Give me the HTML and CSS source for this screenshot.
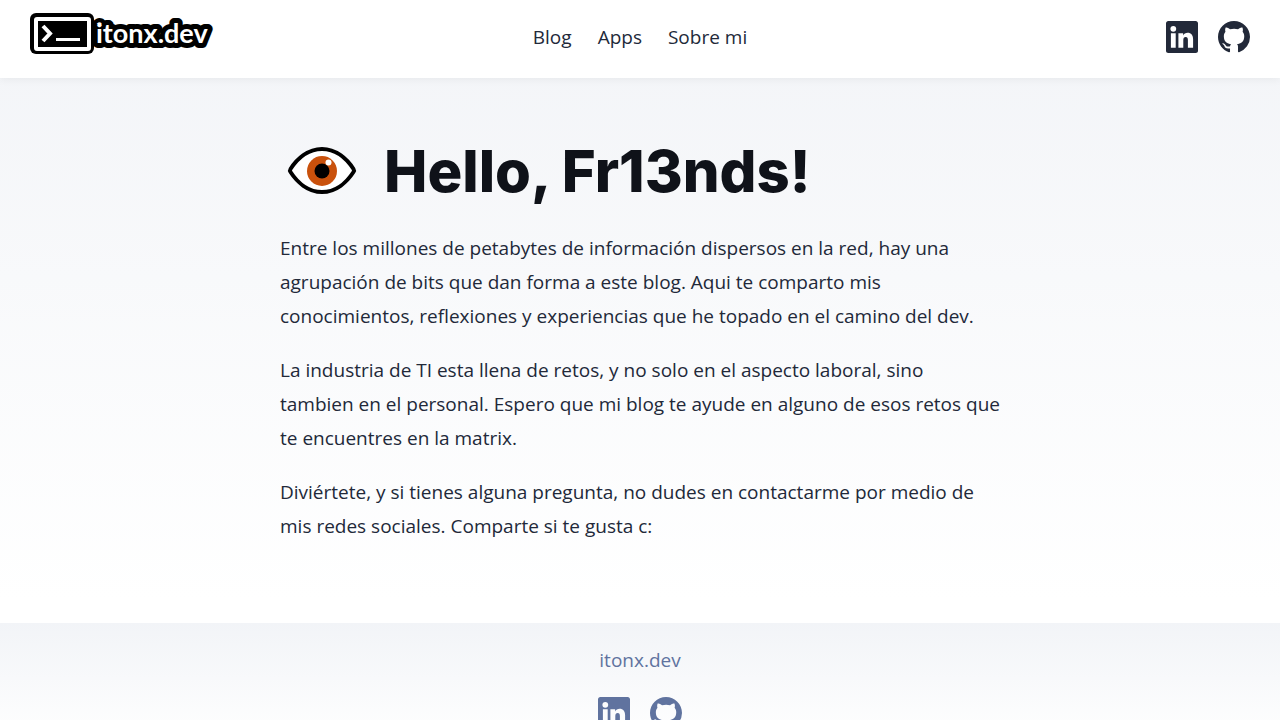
FILE: index.html
```html
<!DOCTYPE html>
<html lang="es">
<head>
    <meta charset="UTF-8">
    <meta name="viewport" content="width=device-width, initial-scale=1.0">
    <title>itonx.dev</title>
    <link rel="stylesheet" href="styles.css">
</head>
<body>
    <svg class="sprite" aria-hidden="true">
        <symbol id="linkedin" viewBox="0 0 32 32">
            <path fill-rule="evenodd" d="M2.3 0h27.4C31 0 32 1 32 2.3v27.4c0 1.3-1 2.3-2.3 2.3H2.3C1 32 0 31 0 29.700V2.300C0 1 1 0 2.300 0zM4.900 12.300v14.400h4.800V12.300zM7.300 4.900a2.900 2.900 0 1 0 0 5.800 2.900 2.900 0 0 0 0-5.800zM12.400 12.300v14.400h4.900v-7.600c0-2 .7-3.200 2.400-3.200 1.600 0 2.200 1.200 2.200 3.200v7.600h5.200v-8.400c0-4-1.900-6.500-5.500-6.500-2 0-3.700 1.100-4.500 2.600v-2.100z"/>
        </symbol>
        <symbol id="github" viewBox="0 0 16 16">
            <path d="M8 0C3.580 0 0 3.580 0 8c0 3.540 2.290 6.530 5.470 7.590.4.070.550-.170.550-.380 0-.190-.010-.820-.010-1.490-2.010.370-2.530-.490-2.690-.940-.090-.230-.480-.940-.820-1.130-.280-.150-.680-.520-.010-.530.630-.010 1.080.580 1.230.820.720 1.210 1.870.870 2.330.660.070-.520.280-.870.510-1.070-1.780-.2-3.640-.890-3.640-3.950 0-.870.310-1.590.820-2.150-.080-.2-.360-1.020.080-2.120 0 0 .670-.210 2.200.820.640-.180 1.320-.270 2-.270s1.360.090 2 .270c1.530-1.040 2.200-.820 2.200-.820.440 1.100.160 1.920.080 2.120.510.560.820 1.270.820 2.150 0 3.070-1.870 3.750-3.650 3.950.290.250.540.730.540 1.480 0 1.070-.010 1.930-.010 2.200 0 .210.150.460.550.380A8.010 8.010 0 0 0 16 8c0-4.420-3.580-8-8-8z"/>
        </symbol>
    </svg>

    <header class="site-header">
        <nav class="nav">
            <a class="logo" href="/" aria-label="itonx.dev">
                <svg width="186" height="42" viewBox="0 0 186 42">
                    <rect width="64" height="41" rx="6"/>
                    <rect class="logo-frame" x="6" y="6" width="53" height="30" rx="1"/>
                    <path class="logo-chevron" d="M13 13l7 7.500-7 7.500"/>
                    <path class="logo-cursor" d="M26 26.500h24"/>
                    <text class="logo-text" x="66" y="30">itonx.dev</text>
                </svg>
            </a>
            <div class="links">
                <a href="/blog">Blog</a>
                <a href="/apps">Apps</a>
                <a href="/about">Sobre mi</a>
            </div>
            <div class="social">
                <a href="#linkedin" aria-label="LinkedIn"><svg class="icon"><use href="#linkedin"/></svg></a>
                <a href="#github" aria-label="GitHub"><svg class="icon"><use href="#github"/></svg></a>
            </div>
        </nav>
    </header>

    <main class="content">
        <h1 class="title">
            <svg class="eye" viewBox="0 0 84 66" aria-hidden="true">
                <path class="eye-shape" d="M10.500 31C17 21 28 11 42 11s25 10 31.500 20q1 1.500 0 3C67 44 56 54 42 54S17 44 10.500 34q-1-1.500 0-3z"/>
                <circle class="iris" cx="42" cy="33" r="15"/>
                <circle cx="42" cy="33" r="7.500"/>
                <circle class="glint" cx="48.500" cy="24.500" r="3"/>
            </svg>
            <span>Hello, Fr13nds!</span>
        </h1>
        <p>Entre los millones de petabytes de información dispersos en la red, hay una agrupación de bits que dan forma a este blog. Aqui te comparto mis conocimientos, reflexiones y experiencias que he topado en el camino del dev.</p>
        <p>La industria de TI esta llena de retos, y no solo en el aspecto laboral, sino tambien en el personal. Espero que mi blog te ayude en alguno de esos retos que te encuentres en la matrix.</p>
        <p>Diviértete, y si tienes alguna pregunta, no dudes en contactarme por medio de mis redes sociales. Comparte si te gusta c:</p>
    </main>

    <footer class="site-footer">
        <div>itonx.dev</div>
        <div class="social footer-social">
            <a href="#linkedin" aria-label="LinkedIn"><svg class="icon"><use href="#linkedin"/></svg></a>
            <a href="#github" aria-label="GitHub"><svg class="icon"><use href="#github"/></svg></a>
        </div>
    </footer>
</body>
</html>
```
FILE: styles.css
```css
body {
    margin: 0;
    font-family: "Open Sans", sans-serif;
    font-size: 19px;
    line-height: 34px;
    color: rgb(34, 41, 57);
    background: linear-gradient(rgba(229, 233, 240, 0.5), #fff) no-repeat;
    background-size: 100% 600px;
}
a {
    color: inherit;
    text-decoration: none;
}
.sprite {
    position: absolute;
    width: 0;
    height: 0;
}
.site-header {
    padding: 0 30px;
    background: #fff;
    box-shadow: 0 2px 8px rgba(0, 0, 0, 0.05);
}
.nav {
    display: grid;
    grid-template-columns: 1fr auto 1fr;
    align-items: start;
    padding: 13px 0 4px;
}
.logo svg {
    display: block;
    overflow: visible;
}
.logo-frame,
.logo-chevron {
    fill: none;
    stroke: #fff;
    stroke-width: 4px;
}
.logo-cursor {
    stroke: #fff;
    stroke-width: 3px;
}
.logo-text {
    font-family: Lato, sans-serif;
    font-size: 27px;
    font-weight: 700;
    fill: #fff;
    stroke: #000;
    stroke-width: 10px;
    stroke-linejoin: round;
    paint-order: stroke;
}
.links {
    display: flex;
    gap: 26px;
    padding: 7px 0 20px;
}
.social {
    display: flex;
    justify-content: flex-end;
    gap: 20px;
    padding-top: 8px;
}
.icon {
    display: block;
    width: 32px;
    height: 32px;
    fill: currentColor;
}
.content {
    max-width: 720px;
    margin: 0 auto;
    padding: 60px 20px;
}
.title {
    display: flex;
    align-items: center;
    gap: 20px;
    margin: 0 0 27px;
    font-family: Inter, sans-serif;
    font-size: 58px;
    font-weight: 800;
    line-height: 66px;
    color: rgb(15, 18, 25);
}
.eye {
    flex: none;
    width: 84px;
    height: 66px;
}
.eye-shape {
    fill: #fff;
    stroke: #000;
    stroke-width: 4px;
}
.iris {
    fill: #c9510c;
}
.glint {
    fill: #fff;
}
p {
    margin: 0 0 20px;
}
.site-footer {
    padding: 20px 20px 100px;
    text-align: center;
    color: rgb(96, 115, 159);
    background: linear-gradient(rgba(229, 233, 240, 0.5), #fff) no-repeat;
    background-size: 100% 120px;
}
.footer-social {
    justify-content: center;
    padding-top: 20px;
}
```
